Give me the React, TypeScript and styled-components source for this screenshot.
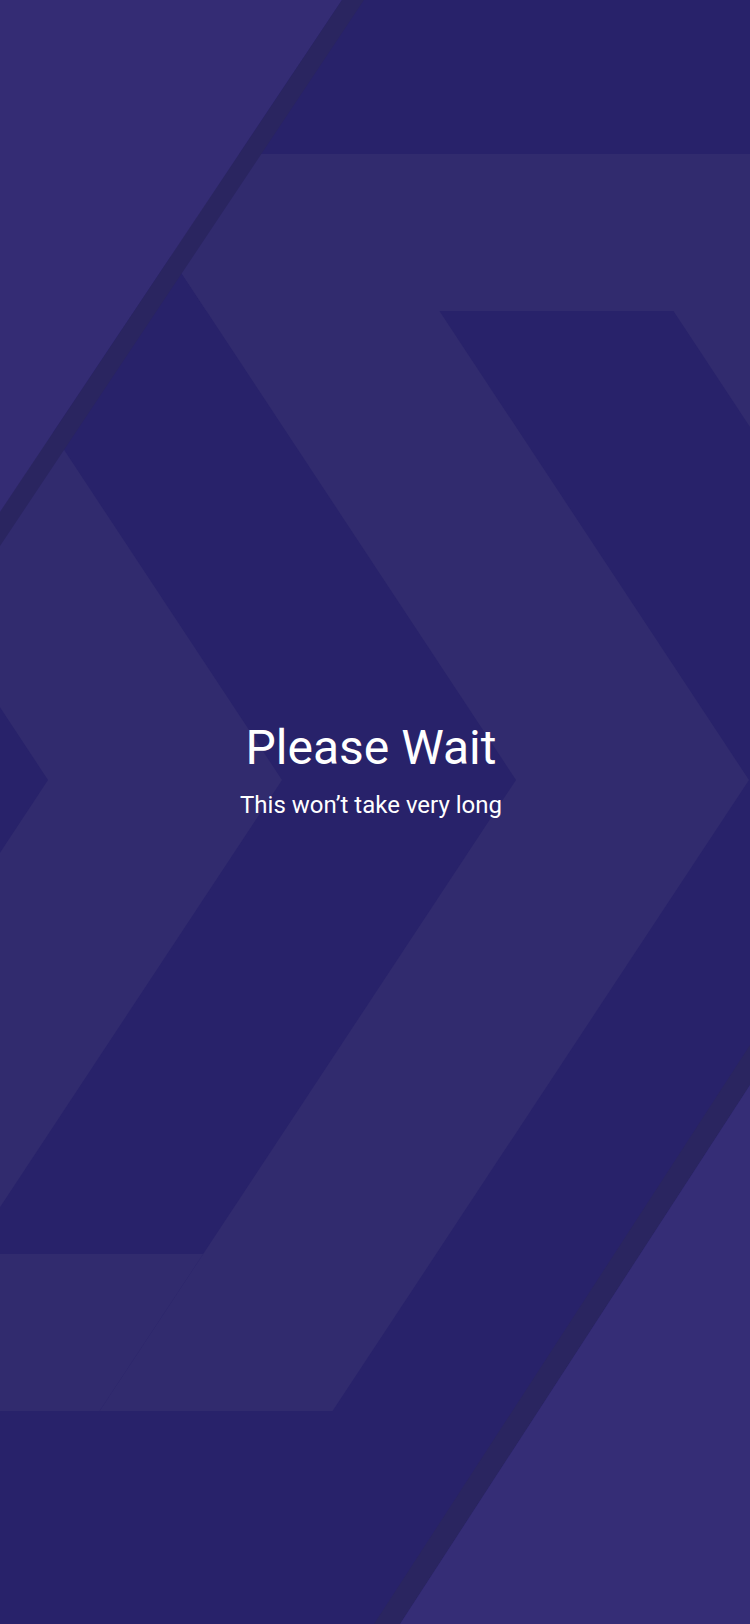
import React from "react";
import styled, { createGlobalStyle } from "styled-components";

const W = 750;
const H = 1624;

const colors = {
  dark: "#28226a",
  medium: "#312b6e",
  light: "#342c74",
  lightAlt: "#352d76",
  stripe: "#2a2560",
  text: "#ffffff",
};

// chevron arms: x = tip - SLOPE * |y - VERTEX|
const SLOPE = 0.66;
const VERTEX = 780;
const TIPS = [48, 282, 516, 749, 983, 1217];

const arm = (tip: number, y: number) => tip - SLOPE * Math.abs(y - VERTEX);

type Pt = [number, number];

const toPoints = (pts: Pt[]) => pts.map(([x, y]) => `${x},${y}`).join(" ");

const band = (a: number, b: number): Pt[] => [
  [arm(a, 0), 0],
  [arm(b, 0), 0],
  [b, VERTEX],
  [arm(b, H), H],
  [arm(a, H), H],
  [a, VERTEX],
];

const mediumBands: Pt[][] = [
  band(TIPS[0], TIPS[1]),
  band(TIPS[2], TIPS[3]),
  band(TIPS[4], TIPS[5]),
];

const shapes: { pts: Pt[]; fill: string }[] = [
  // top strip
  { pts: [[0, 0], [W, 0], [W, 154], [0, 154]], fill: colors.dark },
  {
    pts: [
      [arm(TIPS[2], 154), 154],
      [W, 154],
      [W, 311],
      [arm(TIPS[2], 311), 311],
    ],
    fill: colors.medium,
  },
  // bottom strip
  {
    pts: [
      [0, 1254],
      [arm(TIPS[2], 1254), 1254],
      [arm(TIPS[2], 1411), 1411],
      [0, 1411],
    ],
    fill: colors.medium,
  },
  { pts: [[0, 1411], [W, 1411], [W, H], [0, H]], fill: colors.dark },
  // top-left slab
  { pts: [[0, 0], [342, 0], [0, 512]], fill: colors.light },
  { pts: [[342, 0], [364, 0], [0, 546], [0, 512]], fill: colors.stripe },
  // bottom-right slab
  { pts: [[W, 1045], [W, 1085], [400, H], [374, H]], fill: colors.stripe },
  { pts: [[W, 1085], [W, H], [400, H]], fill: colors.lightAlt },
];

const GlobalStyle = createGlobalStyle`
  html, body {
    margin: 0;
    padding: 0;
    background: ${colors.dark};
  }
  * {
    box-sizing: border-box;
  }
`;

const Screen = styled.div`
  position: relative;
  width: ${W}px;
  height: ${H}px;
  overflow: hidden;
  background: ${colors.dark};
  font-family: Roboto, "Noto Sans", sans-serif;
`;

const Backdrop = styled.svg`
  position: absolute;
  inset: 0;
  width: 100%;
  height: 100%;
  display: block;
`;

const Content = styled.div`
  position: relative;
  display: flex;
  flex-direction: column;
  align-items: center;
  padding: 720px 8px 0 0;
  color: ${colors.text};
`;

const Title = styled.h1`
  margin: 0;
  font-size: 48px;
  line-height: 56px;
  font-weight: 400;
`;

const Subtitle = styled.p`
  margin: 15px 0 0;
  font-size: 24px;
  line-height: 28px;
  font-weight: 400;
`;

const Background = () => (
  <Backdrop viewBox={`0 0 ${W} ${H}`} preserveAspectRatio="none">
    <rect width={W} height={H} fill={colors.dark} />
    {mediumBands.map((pts, i) => (
      <polygon key={"b" + i} points={toPoints(pts)} fill={colors.medium} />
    ))}
    {shapes.map((s, i) => (
      <polygon key={"s" + i} points={toPoints(s.pts)} fill={s.fill} />
    ))}
  </Backdrop>
);

export default function App() {
  return (
    <>
      <GlobalStyle />
      <Screen>
        <Background />
        <Content>
          <Title>Please Wait</Title>
          <Subtitle>This won’t take very long</Subtitle>
        </Content>
      </Screen>
    </>
  );
}
